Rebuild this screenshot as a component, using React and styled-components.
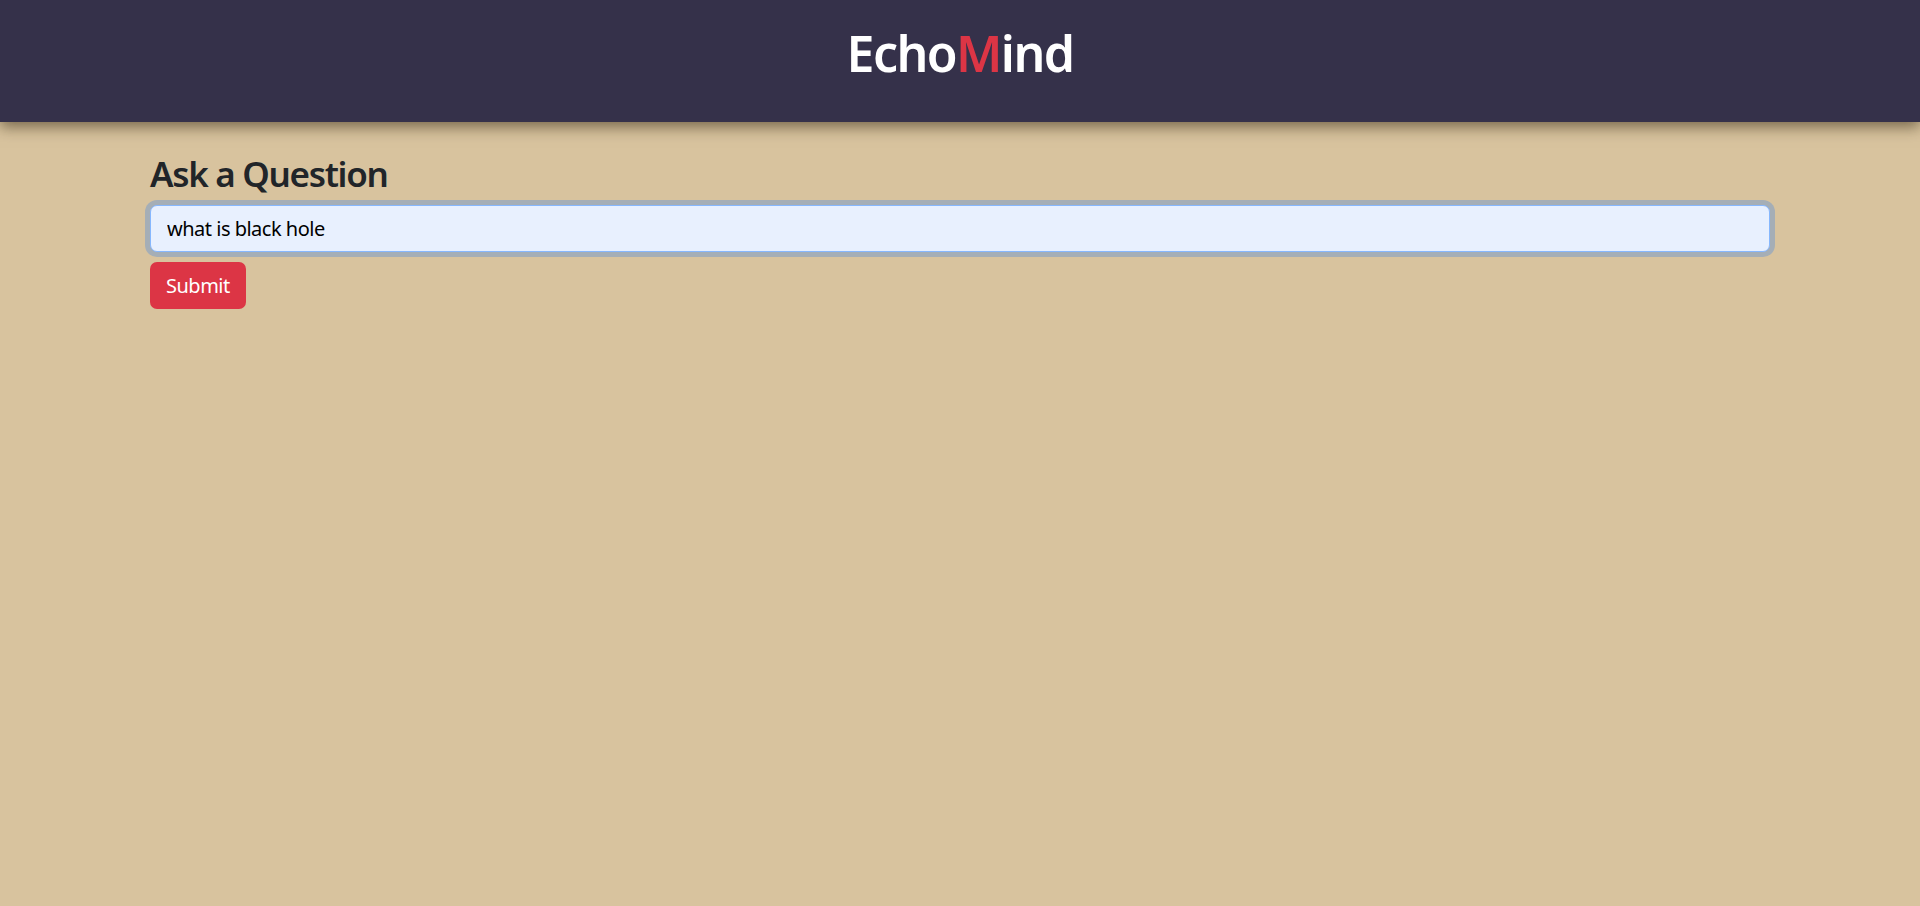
import React, { useState } from 'react';
import styled, { createGlobalStyle } from 'styled-components';

const GlobalStyle = createGlobalStyle`
  html, body {
    margin: 0;
    padding: 0;
    background: #d8c39e;
    font-family: "Noto Sans", "Open Sans", sans-serif;
    color: #212529;
  }
  * { box-sizing: border-box; }
`;

function App() {
  const [question, setQuestion] = useState('what is black hole');

  return (
    <Page>
      <GlobalStyle />
      <Header>
        <Logo>
          Echo<Accent>M</Accent>ind
        </Logo>
      </Header>
      <Main>
        <Heading>Ask a Question</Heading>
        <Form onSubmit={(e) => e.preventDefault()}>
          <Input autoFocus value={question} onChange={(e) => setQuestion(e.target.value)} />
          <Button type="submit">Submit</Button>
        </Form>
      </Main>
    </Page>
  );
}

const Page = styled.div`
  min-height: 906px;
  background: #d8c39e;
`;

const Header = styled.header`
  height: 122px;
  padding-top: 23px;
  background: #35314a;
  text-align: center;
  box-shadow: 0 5px 14px rgba(40, 30, 10, 0.55);
  position: relative;
  z-index: 1;
`;

const Logo = styled.h1`
  margin: 0;
  font-size: 50px;
  line-height: 1.2;
  font-weight: 600;
  color: #ffffff;
  letter-spacing: -1.6px;
`;

const Accent = styled.span`
  color: #dc3545;
`;

const Main = styled.main`
  padding: 31px 150px 0;
`;

const Heading = styled.h3`
  margin: 0 0 10px;
  font-size: 35px;
  line-height: 1.2;
  font-weight: 600;
  color: #212529;
  letter-spacing: -1.3px;
`;

const Form = styled.form`
  display: flex;
  flex-direction: column;
  align-items: flex-start;
  gap: 10px;
`;

const Input = styled.input`
  width: 100%;
  height: 47px;
  padding: 0 16px;
  font-family: inherit;
  font-size: 20px;
  letter-spacing: -0.5px;
  color: #000;
  background: #e8f0fe;
  border: 1px solid #86b7fe;
  border-radius: 7px;
  box-shadow: 0 0 0 5px #a5aeb6;
  outline: none;
  caret-color: #000;
`;

const Button = styled.button`
  height: 47px;
  padding: 0 16px;
  font-family: inherit;
  font-size: 20px;
  letter-spacing: -0.5px;
  color: #fff;
  background: #dc3545;
  border: none;
  border-radius: 7px;
  cursor: pointer;
`;

export default App;
